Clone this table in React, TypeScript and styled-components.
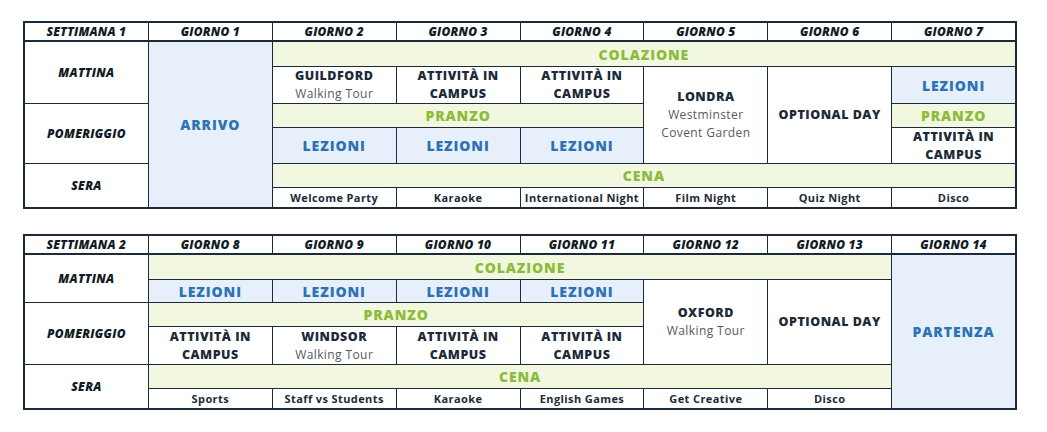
import type { FC, ReactNode } from "react";
import styled, { createGlobalStyle, css } from "styled-components";

const GlobalStyle = createGlobalStyle`
  html, body {
    margin: 0;
    padding: 0;
    background: #ffffff;
  }
  body {
    font-family: "Open Sans", "Liberation Sans", sans-serif;
    color: #1d2a38;
  }
`;

const Page = styled.div`
  width: 1047px;
  padding: 21px 0 0 23px;
  box-sizing: border-box;
  display: flex;
  flex-direction: column;
  gap: 25px;
`;

const Week = styled.div<{ rows: string }>`
  width: 994px;
  box-sizing: border-box;
  border: 2px solid #1b2b3c;
  background: #1b2b3c;
  display: grid;
  grid-template-columns: repeat(8, 1fr);
  grid-template-rows: ${({ rows }) => rows};
  gap: 1px;
`;

type Tone = "plain" | "green" | "blue";

const Cell = styled.div<{
  col: string;
  row: string;
  tone?: Tone;
  head?: boolean;
}>`
  grid-column: ${({ col }) => col};
  grid-row: ${({ row }) => row};
  background: ${({ tone }) =>
    tone === "green" ? "#f2f7e0" : tone === "blue" ? "#e7f0fa" : "#ffffff"};
  display: flex;
  flex-direction: column;
  align-items: center;
  justify-content: center;
  text-align: center;
  min-width: 0;
  ${({ head }) =>
    head &&
    css`
      margin-bottom: 1px;
    `}
`;

const HeadText = styled.span`
  font-size: 12px;
  font-weight: 800;
  font-style: italic;
  letter-spacing: 0.2px;
  color: #111b25;
`;

const SlotText = styled.span`
  font-size: 12px;
  font-weight: 800;
  font-style: italic;
  letter-spacing: 0.3px;
  color: #111b25;
`;

const Meal = styled.span`
  font-size: 14px;
  font-weight: 800;
  color: #8dbb3b;
  letter-spacing: 0.9px;
`;

const Lesson = styled.span`
  font-size: 14px;
  font-weight: 800;
  color: #2d72b5;
  letter-spacing: 0.9px;
`;

const Title = styled.span`
  font-size: 12.5px;
  font-weight: 800;
  line-height: 18px;
  letter-spacing: 0.5px;
  color: #1d2a38;
`;

const Sub = styled.span`
  font-size: 12px;
  font-weight: 400;
  line-height: 18px;
  letter-spacing: 0.4px;
  color: #555b60;
`;

const Evening = styled.span`
  font-size: 11px;
  font-weight: 700;
  letter-spacing: 0.4px;
  color: #1d2a38;
`;

const Trip: FC<{ title: string; sub: ReactNode }> = ({ title, sub }) => (
  <>
    <Title>{title}</Title>
    <Sub>{sub}</Sub>
  </>
);

const Campus = () => (
  <Title>
    ATTIVITÀ IN
    <br />
    CAMPUS
  </Title>
);

const c = (n: number, span = 1) => `${n} / span ${span}`;

const WeekOne = () => (
  <Week rows="18px 24px 36px 23px 35px 23px 19px">
    <Cell col={c(1)} row={c(1)} head>
      <HeadText>SETTIMANA 1</HeadText>
    </Cell>
    {[1, 2, 3, 4, 5, 6, 7].map((d) => (
      <Cell key={d} col={c(d + 1)} row={c(1)} head>
        <HeadText>GIORNO {d}</HeadText>
      </Cell>
    ))}
    <Cell col={c(1)} row={c(2, 2)}>
      <SlotText>MATTINA</SlotText>
    </Cell>
    <Cell col={c(1)} row={c(4, 2)}>
      <SlotText>POMERIGGIO</SlotText>
    </Cell>
    <Cell col={c(1)} row={c(6, 2)}>
      <SlotText>SERA</SlotText>
    </Cell>

    <Cell col={c(2)} row={c(2, 6)} tone="blue">
      <Lesson>ARRIVO</Lesson>
    </Cell>

    <Cell col={c(3, 6)} row={c(2)} tone="green">
      <Meal>COLAZIONE</Meal>
    </Cell>
    <Cell col={c(3)} row={c(3)}>
      <Trip title="GUILDFORD" sub="Walking Tour" />
    </Cell>
    <Cell col={c(4)} row={c(3)}>
      <Campus />
    </Cell>
    <Cell col={c(5)} row={c(3)}>
      <Campus />
    </Cell>
    <Cell col={c(6)} row={c(3, 3)}>
      <Trip
        title="LONDRA"
        sub={
          <>
            Westminster
            <br />
            Covent Garden
          </>
        }
      />
    </Cell>
    <Cell col={c(7)} row={c(3, 3)}>
      <Title>OPTIONAL DAY</Title>
    </Cell>
    <Cell col={c(8)} row={c(3)} tone="blue">
      <Lesson>LEZIONI</Lesson>
    </Cell>

    <Cell col={c(3, 3)} row={c(4)} tone="green">
      <Meal>PRANZO</Meal>
    </Cell>
    <Cell col={c(8)} row={c(4)} tone="green">
      <Meal>PRANZO</Meal>
    </Cell>
    {[3, 4, 5].map((n) => (
      <Cell key={n} col={c(n)} row={c(5)} tone="blue">
        <Lesson>LEZIONI</Lesson>
      </Cell>
    ))}
    <Cell col={c(8)} row={c(5)}>
      <Campus />
    </Cell>

    <Cell col={c(3, 6)} row={c(6)} tone="green">
      <Meal>CENA</Meal>
    </Cell>
    {["Welcome Party", "Karaoke", "International Night", "Film Night", "Quiz Night", "Disco"].map(
      (e, i) => (
        <Cell key={e} col={c(i + 3)} row={c(7)}>
          <Evening>{e}</Evening>
        </Cell>
      )
    )}
  </Week>
);

const WeekTwo = () => (
  <Week rows="18px 24px 22px 23px 37px 23px 19px">
    <Cell col={c(1)} row={c(1)} head>
      <HeadText>SETTIMANA 2</HeadText>
    </Cell>
    {[8, 9, 10, 11, 12, 13, 14].map((d, i) => (
      <Cell key={d} col={c(i + 2)} row={c(1)} head>
        <HeadText>GIORNO {d}</HeadText>
      </Cell>
    ))}
    <Cell col={c(1)} row={c(2, 2)}>
      <SlotText>MATTINA</SlotText>
    </Cell>
    <Cell col={c(1)} row={c(4, 2)}>
      <SlotText>POMERIGGIO</SlotText>
    </Cell>
    <Cell col={c(1)} row={c(6, 2)}>
      <SlotText>SERA</SlotText>
    </Cell>

    <Cell col={c(2, 6)} row={c(2)} tone="green">
      <Meal>COLAZIONE</Meal>
    </Cell>
    {[2, 3, 4, 5].map((n) => (
      <Cell key={n} col={c(n)} row={c(3)} tone="blue">
        <Lesson>LEZIONI</Lesson>
      </Cell>
    ))}
    <Cell col={c(6)} row={c(3, 3)}>
      <Trip title="OXFORD" sub="Walking Tour" />
    </Cell>
    <Cell col={c(7)} row={c(3, 3)}>
      <Title>OPTIONAL DAY</Title>
    </Cell>
    <Cell col={c(8)} row={c(2, 6)} tone="blue">
      <Lesson>PARTENZA</Lesson>
    </Cell>

    <Cell col={c(2, 4)} row={c(4)} tone="green">
      <Meal>PRANZO</Meal>
    </Cell>
    <Cell col={c(2)} row={c(5)}>
      <Campus />
    </Cell>
    <Cell col={c(3)} row={c(5)}>
      <Trip title="WINDSOR" sub="Walking Tour" />
    </Cell>
    <Cell col={c(4)} row={c(5)}>
      <Campus />
    </Cell>
    <Cell col={c(5)} row={c(5)}>
      <Campus />
    </Cell>

    <Cell col={c(2, 6)} row={c(6)} tone="green">
      <Meal>CENA</Meal>
    </Cell>
    {["Sports", "Staff vs Students", "Karaoke", "English Games", "Get Creative", "Disco"].map(
      (e, i) => (
        <Cell key={e + i} col={c(i + 2)} row={c(7)}>
          <Evening>{e}</Evening>
        </Cell>
      )
    )}
  </Week>
);

export default function App() {
  return (
    <>
      <GlobalStyle />
      <Page>
        <WeekOne />
        <WeekTwo />
      </Page>
    </>
  );
}
